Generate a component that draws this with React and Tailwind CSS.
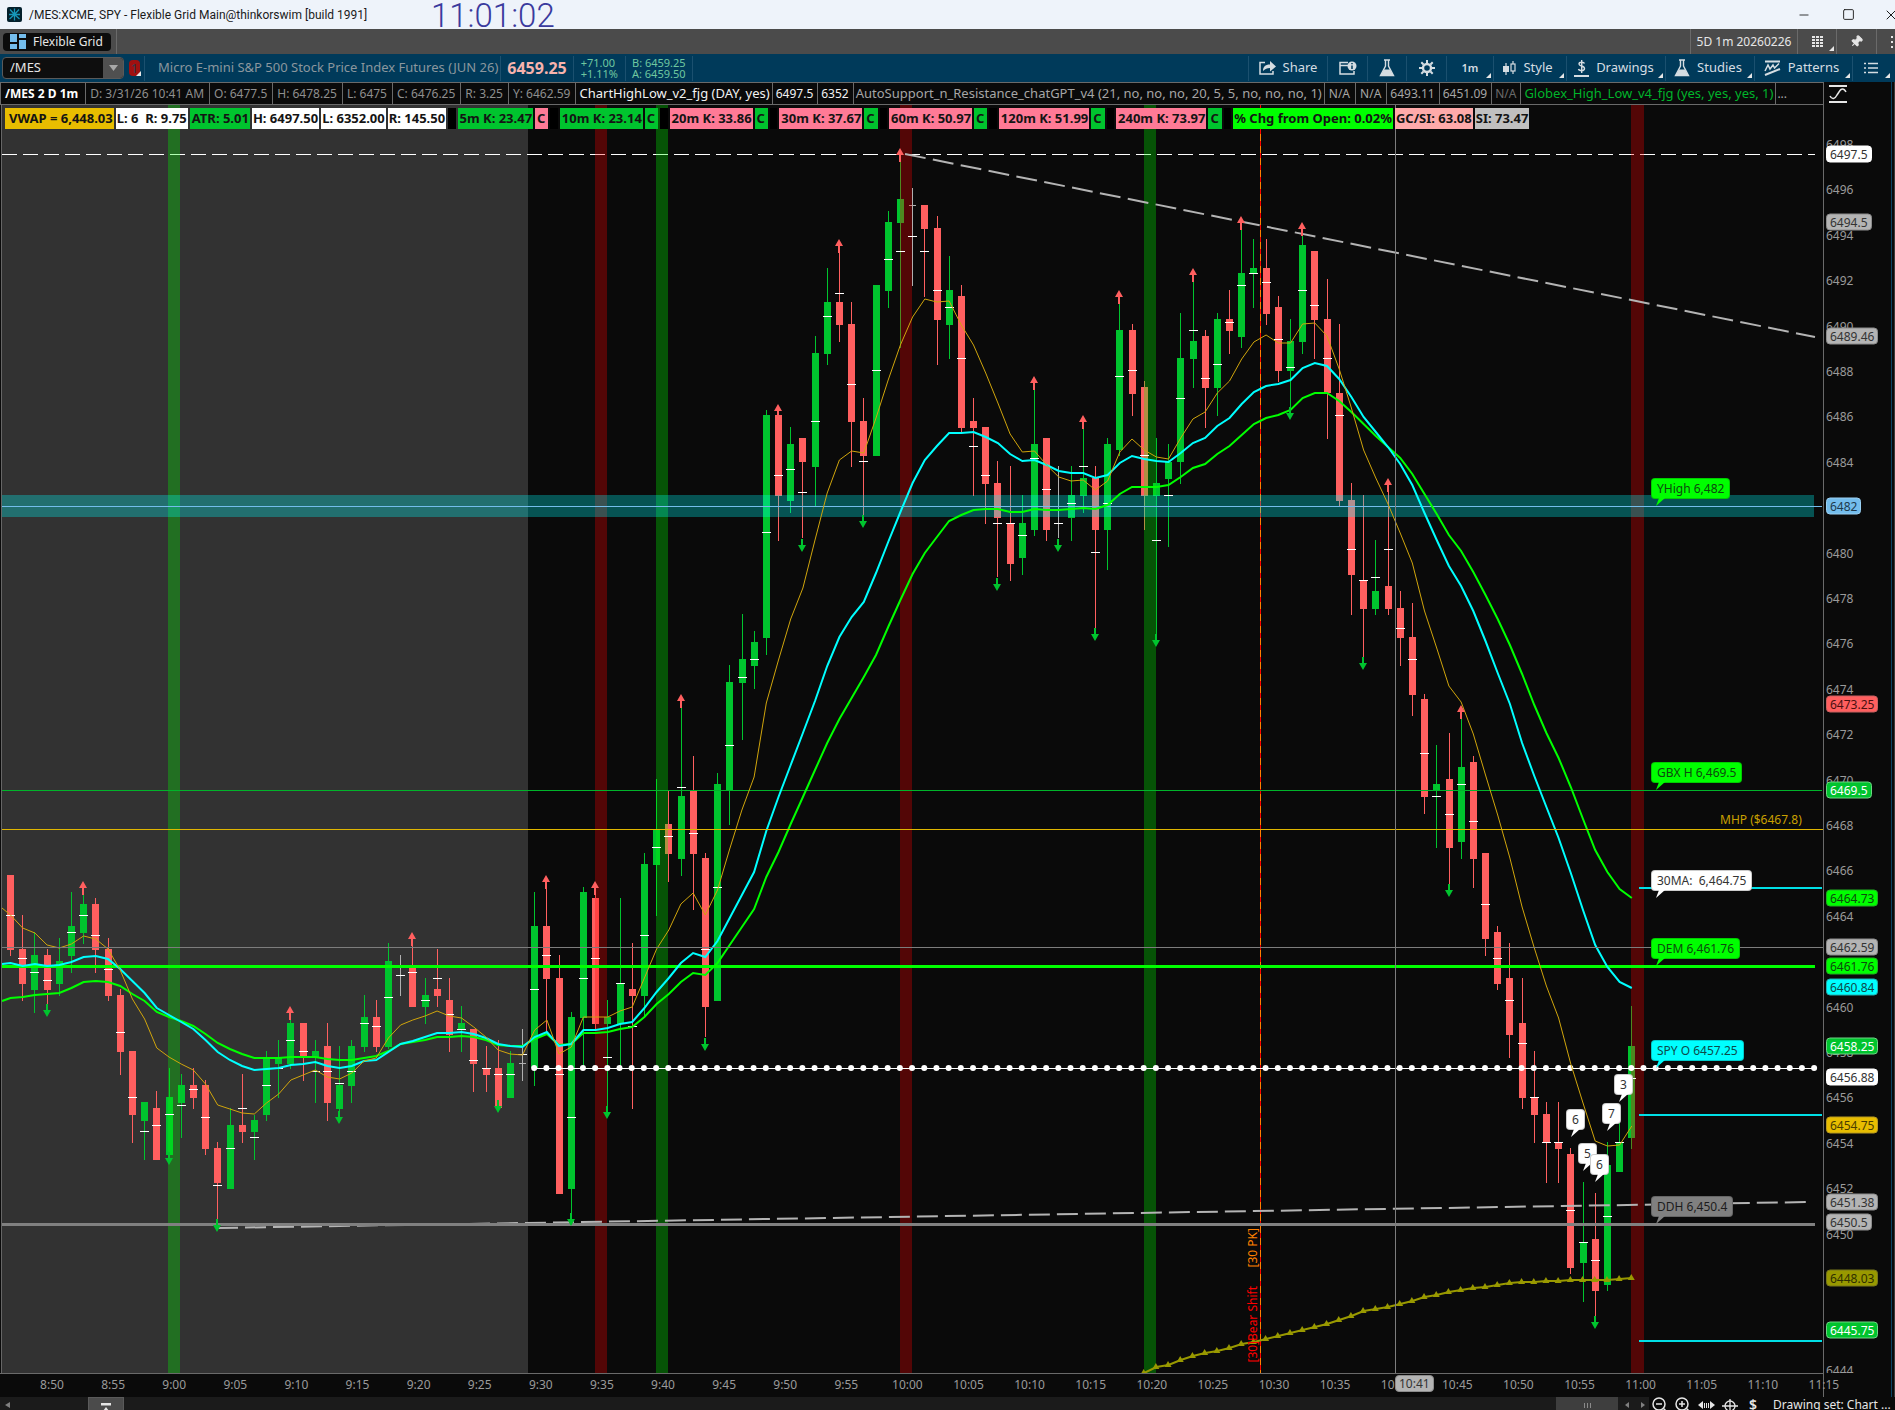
import React from "react";
import { Pin, Minus, Square, X } from "lucide-react";

const UP = "#ff5f5f";
const DOWN = "#00c42e";

// Plot space: x 0..1823, y 105..1373
const PLOT = { w: 1823, top: 105, h: 1268 };
const barX = (i) => 10.5 + 12.19 * i;
const barPx = (i) => Math.floor(barX(i) + 0.1);
const pctX = (x) => `${(x / PLOT.w) * 100}%`;
const pctY = (y) => `${((y - PLOT.top) / PLOT.h) * 100}%`;

// direction, high, body top, body bottom, low, pivot mark
const candles = `r875,875,950,956,915 r915,949,984,1001,958 g932,955,990,1013,972 r949,955,990,1004,980 g938,961,984,996,966
g892,926,956,973,932 g895,904,933,944,915 r898,904,950,973,935 r938,949,996,1001,969 r989,995,1052,1075,1032
r1051,1051,1115,1143,1097 g1102,1102,1121,1160,1131 r1091,1108,1160,1160,1125 g1068,1097,1155,1156,1114 g1074,1085,1103,1138,1105
r1068,1085,1098,1109,1089 r1080,1085,1149,1155,1117 r1142,1148,1183,1219,1185 g1108,1125,1189,1189,1148 r1074,1125,1132,1143,1108
g1115,1120,1132,1160,1137 g1051,1057,1115,1121,1085 g1040,1057,1064,1098,1068 g1020,1023,1064,1069,1040 r1023,1023,1058,1081,1051
g1040,1051,1057,1103,1071 r1023,1046,1103,1121,1071 g1046,1085,1109,1111,1083 g1040,1046,1086,1103,1071 g995,1017,1047,1052,1023
r1000,1017,1047,1052,1026 g943,961,1047,1049,997 w955,975,975,996,975 r946,966,1007,1007,972 g978,995,1007,1024,1000
r949,989,996,1007,978 r978,1000,1035,1052,1014 g1006,1023,1030,1052,1029 r1029,1029,1064,1092,1060 r1046,1068,1075,1092,1068
r1040,1068,1108,1109,1074 g1051,1063,1098,1098,1074 w1029,1063,1063,1081,1054 g892,926,1068,1086,989 r889,926,979,1032,955
r955,978,1194,1194,1074 g1012,1017,1189,1213,1117 g887,892,1018,1068,978 r895,898,1024,1030,958 g1000,1017,1024,1107,1057
g898,983,1024,1068,983 r943,989,996,1109,1026 g853,864,996,1017,935 g779,829,865,916,847 r791,824,854,882,836
g708,796,859,876,787 r756,790,854,910,833 r853,858,1007,1037,949 g773,784,1001,1001,887 g665,682,790,825,745
g614,659,683,740,677 g631,642,666,689,659 g410,415,638,655,532 r415,415,496,541,475 g427,444,501,513,469
r438,438,462,538,492 g336,353,467,506,421 g268,302,354,365,316 r253,302,325,342,293 r302,324,422,467,384
r398,421,456,515,461 g285,285,456,456,370 g211,222,291,308,259 g162,199,223,348,251 w188,205,205,286,236
r205,205,229,297,251 r216,228,320,365,290 g256,290,325,359,307 r285,296,428,433,358 r398,421,428,496,446
r427,427,484,524,475 r461,483,518,577,523 r466,523,564,581,523 g495,523,558,575,535 g390,444,530,536,458
r438,438,530,541,489 w466,523,523,538,523 g466,495,518,541,503 g429,478,496,513,466 r466,478,530,628,552
g438,444,530,570,503 g304,330,450,456,376 r324,330,394,416,370 r381,387,496,530,455 g438,483,496,634,540
g444,462,479,547,495 g313,358,462,484,398 g282,341,359,388,330 r330,336,388,428,378 g313,319,388,416,364
r290,319,331,354,322 g230,273,337,348,285 g239,268,273,308,273 r239,268,314,325,282 r296,307,371,382,339
g319,341,371,407,367 g236,245,342,354,290 r251,251,320,359,305 r279,319,393,439,358 r324,393,501,506,415
r483,500,575,615,549 r495,580,609,657,580 g540,591,609,615,577 r492,586,609,615,549 r591,608,638,666,628
r603,637,695,716,659 r694,699,797,814,753 g745,784,791,848,796 r733,779,848,885,814 g718,767,842,859,784
r756,762,859,888,821 r853,853,939,956,904 r926,932,984,990,958 r943,978,1035,1058,1000 r978,1023,1098,1109,1043
r1051,1097,1115,1143,1097 r1102,1114,1142,1183,1142 r1102,1142,1149,1183,1142 r1148,1154,1268,1274,1210 g1182,1243,1263,1302,1242
r1193,1239,1291,1317,1260 g1142,1165,1285,1291,1216 g1122,1142,1172,1172,1142 g1006,1046,1138,1149,1078`
  .split(/\s+/)
  .map((s) => [s[0], ...s.slice(1).split(",").map(Number)]);

// bar index, tip y
const peaks = [[6, 881], [23, 1006], [33, 932], [44, 875], [48, 881], [55, 694], [63, 404], [68, 239], [73, 148], [84, 376], [88, 415], [91, 290], [97, 268], [101, 216], [106, 222], [113, 478], [119, 705]];
const troughs = [[3, 1017], [13, 1165], [17, 1232], [27, 1124], [40, 1113], [46, 1226], [49, 1119], [57, 1051], [65, 552], [70, 528], [81, 591], [86, 552], [89, 641], [94, 647], [105, 420], [111, 670], [118, 897], [130, 1329]];

const gold = [915, 928, 933, 945, 948, 944, 936, 939, 949, 970, 999, 1019, 1048, 1057, 1064, 1070, 1084, 1105, 1109, 1113, 1114, 1103, 1094, 1080, 1075, 1070, 1077, 1079, 1073, 1061, 1058, 1038, 1025, 1020, 1016, 1011, 1016, 1018, 1027, 1037, 1050, 1054, 1055, 1030, 1020, 1054, 1047, 1017, 1017, 1017, 1011, 1007, 978, 949, 930, 904, 893, 915, 890, 849, 810, 777, 703, 660, 619, 588, 540, 493, 460, 451, 453, 418, 380, 345, 317, 299, 302, 301, 325, 345, 373, 403, 434, 452, 451, 465, 477, 481, 480, 490, 481, 452, 439, 450, 457, 459, 438, 419, 412, 393, 381, 359, 342, 335, 343, 343, 324, 323, 336, 369, 408, 450, 478, 504, 533, 563, 611, 648, 686, 702, 734, 775, 815, 858, 907, 948, 986, 1018, 1064, 1103, 1141, 1146, 1145, 1126];
const cyan = [963, 966, 964, 966, 965, 962, 957, 956, 959, 969, 981, 993, 1008, 1015, 1022, 1029, 1040, 1052, 1060, 1066, 1070, 1069, 1068, 1065, 1064, 1062, 1066, 1068, 1066, 1061, 1060, 1052, 1044, 1041, 1037, 1033, 1033, 1032, 1034, 1038, 1044, 1046, 1047, 1037, 1032, 1046, 1044, 1030, 1030, 1028, 1024, 1022, 1008, 992, 978, 963, 953, 957, 941, 918, 895, 872, 831, 797, 765, 733, 701, 666, 637, 617, 602, 573, 542, 512, 483, 460, 446, 433, 433, 432, 437, 443, 454, 461, 460, 465, 471, 473, 473, 478, 475, 463, 456, 459, 461, 462, 453, 443, 438, 426, 418, 404, 392, 386, 384, 380, 368, 363, 366, 379, 397, 417, 432, 447, 464, 485, 513, 540, 566, 586, 611, 641, 673, 704, 743, 776, 807, 838, 873, 910, 945, 967, 982, 988];
const lime = [998, 997, 995, 994, 993, 988, 982, 981, 982, 986, 994, 1001, 1012, 1017, 1021, 1026, 1034, 1043, 1049, 1054, 1058, 1058, 1058, 1057, 1057, 1057, 1059, 1060, 1060, 1058, 1056, 1051, 1044, 1042, 1040, 1037, 1037, 1036, 1037, 1040, 1045, 1046, 1046, 1039, 1034, 1045, 1044, 1033, 1033, 1032, 1029, 1027, 1017, 1004, 994, 982, 973, 975, 963, 945, 927, 909, 877, 852, 824, 797, 770, 743, 719, 698, 677, 655, 627, 600, 574, 553, 537, 521, 515, 510, 509, 509, 512, 512, 509, 510, 510, 509, 508, 509, 505, 494, 487, 487, 487, 485, 477, 468, 464, 454, 446, 435, 424, 418, 415, 410, 398, 393, 393, 401, 412, 424, 436, 447, 458, 474, 494, 514, 535, 551, 572, 595, 619, 645, 674, 705, 733, 758, 787, 819, 850, 872, 889, 898];
const vwapStart = 93;
const vwap = [1373, 1367, 1365, 1360, 1356, 1353, 1351, 1348, 1344, 1342, 1339, 1336, 1333, 1330, 1327, 1324, 1320, 1316, 1311, 1309, 1307, 1304, 1301, 1297, 1295, 1292, 1290, 1288, 1287, 1285, 1283, 1282, 1282, 1281, 1281, 1280, 1280, 1280, 1280, 1279, 1278];

const path = (ys, y0, start = 0) =>
  (y0 ? `2,${y0} ` : "") + ys.map((y, k) => `${barX(k + start).toFixed(1)},${y}`).join(" ");

function Chart() {
  return (
    <svg
      className="absolute inset-0 h-full w-full"
      viewBox={`0 ${PLOT.top} ${PLOT.w} ${PLOT.h}`}
      preserveAspectRatio="none"
      role="img"
      aria-label="/MES one minute candles"
    >
      <rect x="2" y="105" width="526" height="1268" fill="#323232" />
      <g shapeRendering="crispEdges">
        <rect x="1260" y="105" width="1" height="1268" fill="#ff8000" />
        <line x1="1260.5" x2="1260.5" y1="105" y2="1373" stroke="#ff0000" strokeDasharray="5 7" />
      </g>
      <line x1="2" x2="1815" y1="154.5" y2="154.5" stroke="#fff" strokeDasharray="15 6" shapeRendering="crispEdges" />
      <g shapeRendering="crispEdges">
        {candles.map(([d, hi, a, b, lo], i) => {
          const c = d === "g" ? DOWN : d === "r" ? UP : "#b0b0b0";
          const x = barPx(i);
          return (
            <g key={i} fill={c}>
              <rect x={x} y={hi} width="1" height={lo - hi} />
              <rect x={x - 3} y={a} width="7" height={Math.max(1, b - a)} />
            </g>
          );
        })}
      </g>
      <g shapeRendering="crispEdges">
        <rect x="168" y="105" width="12" height="1268" fill="#00ff00" fillOpacity="0.3" />
        <rect x="595" y="105" width="12" height="1268" fill="#ff0000" fillOpacity="0.3" />
        <rect x="656" y="105" width="12" height="1268" fill="#00ff00" fillOpacity="0.3" />
        <rect x="900" y="105" width="12" height="1268" fill="#ff0000" fillOpacity="0.3" />
        <rect x="1144" y="105" width="12" height="1268" fill="#00ff00" fillOpacity="0.3" />
        <rect x="1631" y="105" width="13" height="1268" fill="#ff0000" fillOpacity="0.3" />
        <rect x="2" y="495" width="1812" height="22" fill="#00ffff" fillOpacity="0.3" />
        <rect x="2" y="506" width="1820" height="1" fill="#74bdec" />
        <rect x="2" y="790" width="1820" height="1" fill="#00b42a" />
      </g>
      <g shapeRendering="crispEdges" fill="#fff">
        {candles.map((c, i) => (
          <rect key={i} x={barPx(i) - 4} y={c[5]} width="9" height="1" />
        ))}
      </g>
      <polyline points="217,1228 1809,1202" fill="none" stroke="#b4b4b4" strokeWidth="2" strokeDasharray="21 7" />
      <polyline points="905,154 1815,337" fill="none" stroke="#b4b4b4" strokeWidth="2" strokeDasharray="21 7.4" />
      <g shapeRendering="crispEdges">
        <rect x="2" y="965" width="1813" height="3" fill="#00ff00" />
        <rect x="534" y="1068" width="1282" height="1" fill="#fff" />
        <rect x="2" y="1223" width="1813" height="3" fill="#808080" />
      </g>
      {Array.from({ length: 106 }, (_, k) => (
        <circle key={k} cx={barX(43 + k) - 0.5} cy="1068" r="3" fill="#fff" />
      ))}
      <polyline points={path(lime, 1001)} fill="none" stroke="#00ff00" strokeWidth="2" />
      <polyline points={path(cyan, 964)} fill="none" stroke="#00ffff" strokeWidth="2" />
      <polyline points={path(gold, 908)} fill="none" stroke="#d0a50c" strokeWidth="1" />
      <polyline points={path(vwap, 0, vwapStart)} fill="none" stroke="#999900" strokeWidth="2" />
      {vwap.map((y, k) => {
        const x = barX(k + vwapStart) - 0.5;
        return <polygon key={k} points={`${x - 3.5},${y + 2} ${x},${y - 4} ${x + 3.5},${y + 2}`} fill="#999900" />;
      })}
      {peaks.map(([i, y]) => (
        <path key={i} d={`M${barPx(i)} ${y}l4 7h-3v7h-2v-7h-3z`} fill={UP} />
      ))}
      {troughs.map(([i, y]) => (
        <path key={i} d={`M${barPx(i)} ${y}l4 -7h-3v-6h-2v6h-3z`} fill={DOWN} />
      ))}
      <g shapeRendering="crispEdges">
        <rect x="1639" y="887" width="183" height="2" fill="#00dfe6" />
        <rect x="1639" y="1114" width="183" height="2" fill="#00dfe6" />
        <rect x="1639" y="1340" width="183" height="2" fill="#00dfe6" />
        <rect x="2" y="829" width="1821" height="1" fill="#e0b600" />
        <rect x="2" y="947" width="1821" height="1" fill="#7d7d7d" />
        <rect x="1395" y="105" width="1" height="1268" fill="#7d7d7d" />
        <rect x="1" y="105" width="1" height="1268" fill="#666" />
      </g>
    </svg>
  );
}

const bubbles = [
  ["YHigh 6,482", 1651, 478, "bg-[#00ff00] text-[#0d4a0d]", "#00ff00"],
  ["GBX H 6,469.5", 1651, 762, "bg-[#00ff00] text-[#0d4a0d]", "#00ff00"],
  ["30MA:  6,464.75", 1651, 870, "bg-white text-[#333]", "#ffffff"],
  ["DEM 6,461.76", 1651, 938, "bg-[#00ff00] text-[#0d4a0d]", "#00ff00"],
  ["SPY O 6457.25", 1651, 1040, "bg-[#00ffff] text-[#0d4a4a]", "#00ffff"],
  ["DDH 6,450.4", 1651, 1196, "bg-[#808080] text-[#1c1c1c]", "#808080"],
  ["6", 1566, 1109, "bg-white text-[#333]", "#ffffff"],
  ["5", 1578, 1143, "bg-white text-[#333]", "#ffffff"],
  ["6", 1590, 1154, "bg-white text-[#333]", "#ffffff"],
  ["7", 1602, 1103, "bg-white text-[#333]", "#ffffff"],
  ["3", 1614, 1074, "bg-white text-[#333]", "#ffffff"],
];

function Bubble({ text, x, y, tone, fill }) {
  return (
    <div className="absolute" style={{ left: pctX(x), top: pctY(y) }}>
      <div className={`h-[21px] rounded border border-black/20 px-[5px] text-xs leading-5 whitespace-pre ${tone}`}>{text}</div>
      <svg className="absolute top-5 left-[5px]" width="9" height="8" viewBox="0 0 9 8" aria-hidden="true">
        <path d="M3 0H9L0 8z" fill={fill} />
      </svg>
    </div>
  );
}

const chips = [
  ["6497.5", 154, "bg-white text-[#333] border-white"],
  ["6494.5", 222, "bg-[#b4b4b4] text-[#333] border-[#8c8c8c]"],
  ["6489.46", 336, "bg-[#b4b4b4] text-[#333] border-[#8c8c8c]"],
  ["6482", 506, "bg-[#74bdec] text-[#1d3a4c] border-[#9ad0f3]"],
  ["6473.25", 704, "bg-[#ff5f5f] text-[#4a1010] border-[#c96060]"],
  ["6469.5", 790, "bg-[#00c42e] text-white border-[#6fd384]"],
  ["6464.73", 898, "bg-[#00ff00] text-[#0d4a0d] border-[#20b020]"],
  ["6462.59", 947, "bg-[#b4b4b4] text-[#333] border-[#8c8c8c]"],
  ["6461.76", 966, "bg-[#00ff00] text-[#0d4a0d] border-[#20b020]"],
  ["6460.84", 987, "bg-[#00ffff] text-[#0d4a4a] border-[#20b0b0]"],
  ["6458.25", 1046, "bg-[#00c42e] text-white border-[#6fd384]"],
  ["6456.88", 1077, "bg-white text-[#333] border-white"],
  ["6454.75", 1125, "bg-[#e8bd00] text-[#4a3d00] border-[#b89a20]"],
  ["6451.38", 1202, "bg-[#b4b4b4] text-[#333] border-[#8c8c8c]"],
  ["6450.5", 1222, "bg-[#b4b4b4] text-[#333] border-[#8c8c8c]"],
  ["6448.03", 1278, "bg-[#999900] text-[#303000] border-[#77771a]"],
  ["6445.75", 1330, "bg-[#00c42e] text-white border-[#6fd384]"],
];

const covered = [6482, 6462, 6448, 6446];
const prices = Array.from({ length: 28 }, (_, k) => 6498 - 2 * k).filter((p) => !covered.includes(p));
const priceY = (p) => 145 + (6498 - p) * 22.7;
const times = ["8:50", "8:55", "9:00", "9:05", "9:10", "9:15", "9:20", "9:25", "9:30", "9:35", "9:40", "9:45", "9:50", "9:55", "10:00", "10:05", "10:10", "10:15", "10:20", "10:25", "10:30", "10:35", "10:40", "10:45", "10:50", "10:55", "11:00", "11:05", "11:10", "11:15"];

const DATA = "pl-1 pr-[5px] text-[#8f8f8f]";
const VALUE = "pl-1 pr-[5px] text-[#a6a6a6]";
const header = [
  ["D: 3/31/26 10:41 AM", DATA],
  ["O: 6477.5", DATA],
  ["H: 6478.25", DATA],
  ["L: 6475", DATA],
  ["C: 6476.25", DATA],
  ["R: 3.25", DATA],
  ["Y: 6462.59", DATA],
  ["ChartHighLow_v2_fjg (DAY, yes)", "pl-[3px] pr-[2px] text-[13px] text-[#f2f2f2]"],
  ["6497.5", "pl-[3px] pr-1 text-[#f2f2f2]"],
  ["6352", "pl-[3px] pr-1 text-[#f2f2f2]"],
  ["AutoSupport_n_Resistance_chatGPT_v4 (21, no, no, no, 20, 5, 5, no, no, no, 1)", "pl-[2px] pr-[2px] text-[13px] text-[#a6a6a6]"],
  ["N/A", VALUE],
  ["N/A", VALUE],
  ["6493.11", "pl-[3px] pr-1 text-[#a6a6a6]"],
  ["6451.09", "pl-[3px] pr-1 text-[#a6a6a6]"],
  ["N/A", "pl-[3px] pr-1 text-[#6a6a6a]"],
  ["Globex_High_Low_v4_fjg (yes, yes, yes, 1)", "pl-[3px] pr-[2px] text-[13px] text-[#00b42a]"],
];

const G = "bg-[#00c42e] pl-[2px] pr-px";
const P = "bg-[#ff7a96] pl-[2px] pr-px";
const CG = "bg-[#00c42e] pl-[2px] pr-[3px]";
const CP = "bg-[#ff7a96] pl-[2px] pr-[3px]";
const W = "bg-white px-px";
const K = "bg-black px-[2px]";
const labels = [
  ["VWAP = 6,448.03", "bg-[#e8bd00] pl-1 pr-px"],
  ["L: 6  R: 9.75", W],
  ["ATR: 5.01", G],
  ["H: 6497.50", W],
  ["L: 6352.00", W],
  ["R: 145.50", W],
  [" ", K],
  ["5m K: 23.47", G],
  ["C", CP],
  [" ", K],
  ["10m K: 23.14", G],
  ["C", CG],
  [" ", K],
  ["20m K: 33.86", P],
  ["C", CG],
  [" ", K],
  ["30m K: 37.67", P],
  ["C", CG],
  [" ", K],
  ["60m K: 50.97", P],
  ["C", CG],
  [" ", K],
  ["120m K: 51.99", P],
  ["C", CG],
  [" ", K],
  ["240m K: 73.97", P],
  ["C", CG],
  [" ", K],
  ["% Chg from Open: 0.02%", "bg-[#00ff00] px-px"],
  ["GC/SI: 63.08", "bg-[#ffaaaa] px-px"],
  ["SI: 73.47", "bg-[#c0c0c0] px-px"],
];

function Corner() {
  return (
    <svg className="absolute right-[2px] bottom-[3px]" width="5" height="5" viewBox="0 0 5 5" aria-hidden="true">
      <path d="M5 0V5H0z" fill="#e6e6e6" />
    </svg>
  );
}

function Flask() {
  return (
    <svg width="16" height="18" viewBox="0 0 16 18" aria-hidden="true">
      <path d="M5 1h6M6.5 1v6L1.5 16.5h13L9.5 7V1" fill="none" stroke="#d5dde2" strokeWidth="1.4" />
      <path d="M5 10.5h6l3.5 6h-13z" fill="#d5dde2" />
    </svg>
  );
}

function Tool({ className, label, children, corner }) {
  return (
    <button
      type="button"
      aria-label={label}
      className={`relative flex h-full items-center justify-center gap-[7px] border-l border-[#1b506f] text-[13px] text-[#d5dde2] ${className}`}
    >
      {children}
      {corner && <Corner />}
    </button>
  );
}

function TitleBar() {
  return (
    <header className="flex h-[29px] shrink-0 items-center bg-[#eef3fa] pl-[7px] text-[#1b1b1b]">
      <svg width="15" height="15" viewBox="0 0 15 15" aria-hidden="true">
        <rect width="15" height="15" rx="2" fill="#04202c" />
        <path d="M7.5 7.5L3 2.5M7.5 7.5L12 2.5M7.5 7.5L2.5 12M7.5 7.5L12.5 12M7.5 7.5V1.5M7.5 7.5V13.5M7.5 7.5H2M7.5 7.5H13" stroke="#1796b8" strokeWidth="1.3" />
      </svg>
      <h1 className="ml-[7px] w-[402px] font-['Roboto'] text-xs whitespace-nowrap">/MES:XCME, SPY - Flexible Grid Main@thinkorswim [build 1991]</h1>
      <time className="pt-[3px] font-['Roboto'] text-[33px] leading-8 font-light text-[#3a3a9e]">11:01:02</time>
      <div className="ml-auto flex items-center overflow-hidden">
        <button type="button" aria-label="Minimize" className="flex w-[45px] justify-center">
          <Minus size={14} strokeWidth={1.5} />
        </button>
        <button type="button" aria-label="Maximize" className="flex w-[45px] justify-center">
          <Square size={13} strokeWidth={1.7} />
        </button>
        <button type="button" aria-label="Close" className="-mr-[5px] ml-[11px] flex w-[18px] justify-center">
          <X size={16} strokeWidth={1.5} />
        </button>
      </div>
    </header>
  );
}

function TabBar() {
  return (
    <nav className="flex h-[25px] shrink-0 items-stretch overflow-hidden bg-[#4b4b4b] text-[#e6e6e6]">
      <div className="flex w-[117px] items-center border-r border-[#6a6a6a] pl-[3px]">
        <button type="button" className="flex h-[18px] w-[108px] items-center gap-[7px] rounded bg-[#0c0c0c] pl-[7px] text-xs whitespace-nowrap">
          <svg width="16" height="15" viewBox="0 0 16 15" fill="#74bdec" aria-hidden="true">
            <path d="M0 0h7v8H0zM9 0h7v4H9zM9 6h7v9H9zM0 10h7v5H0z" />
          </svg>
          Flexible Grid
        </button>
      </div>
      <div className="ml-auto flex items-stretch">
        <button type="button" className="w-[107px] border-l border-[#6a6a6a] text-center text-xs whitespace-nowrap">5D 1m 20260226</button>
        <button type="button" aria-label="Layouts" className="relative flex w-[39px] items-center justify-center border-l border-[#6a6a6a]">
          <svg width="11" height="11" viewBox="0 0 11 11" fill="#e6e6e6" aria-hidden="true">
            {[0, 3, 6, 9].map((y) => [0, 4, 8].map((x) => <rect key={`${x}-${y}`} x={x} y={y} width="3" height="2" />))}
          </svg>
          <Corner />
        </button>
        <button type="button" aria-label="Pin" className="flex w-10 items-center justify-center border-l border-[#6a6a6a]">
          <Pin size={13} fill="#e6e6e6" className="rotate-45" />
        </button>
        <button type="button" aria-label="More" className="flex w-[19px] items-center justify-end border-l border-[#6a6a6a] pr-[2px]">
          <svg width="2" height="12" viewBox="0 0 2 12" fill="#e6e6e6" aria-hidden="true">
            <path d="M0 0h2v2H0zM0 5h2v2H0zM0 10h2v2H0z" />
          </svg>
        </button>
      </div>
    </nav>
  );
}

function Toolbar() {
  return (
    <div className="flex h-[28px] shrink-0 items-center bg-[#003a5a] pr-[3px] pl-[2px]">
      <div className="flex h-[22px] w-[122px] items-stretch overflow-hidden rounded border border-[#5a5a5a] bg-[#0e0e0e]">
        <input aria-label="Symbol" defaultValue="/MES" className="w-[100px] bg-transparent pl-[7px] text-[13px] text-[#e6e6e6]" />
        <button type="button" aria-label="Symbol list" className="flex w-5 items-center justify-center bg-[#505050]">
          <svg width="9" height="6" viewBox="0 0 9 6" aria-hidden="true">
            <path d="M0 0h9L4.500 6z" fill="#a8a8a8" />
          </svg>
        </button>
      </div>
      <button type="button" className="relative ml-[5px] flex h-[22px] w-[14px] items-center">
        <span className="h-4 w-[11px] rounded-sm bg-[#a01010] text-center text-[13px] leading-4 text-[#2a3a4a]">1</span>
        <Corner />
      </button>
      <div className="ml-px flex h-[25px] items-center border-l border-[#1b506f] pr-[2px] pl-[13px] text-[13px] whitespace-nowrap text-[#8b979e]">
        Micro E-mini S&amp;P 500 Stock Price Index Futures (JUN 26)
      </div>
      <div className="flex h-[25px] items-center border-l border-[#1b506f] px-[6px] text-base font-bold text-[#f7b3ad]">6459.25</div>
      <div className="flex h-[25px] flex-col justify-center border-l border-[#1b506f] px-[7px] text-[11px] leading-[11px] text-[#6fc7a0]">
        <span>+71.00</span>
        <span>+1.11%</span>
      </div>
      <div className="flex h-[25px] flex-col justify-center border-x border-[#1b506f] px-[6px] text-[11px] leading-[11px] text-[#6fc7a0]">
        <span>B: 6459.25</span>
        <span>A: 6459.50</span>
      </div>
      <div className="ml-auto flex h-[25px] items-center">
        <Tool className="w-[79px]">
          <svg width="17" height="14" viewBox="0 0 17 14" aria-hidden="true">
            <path d="M6 1.500H1V13H14V10" fill="none" stroke="#d5dde2" strokeWidth="1.500" />
            <path d="M4 10C4 6 6 3.500 11 3.500V0L17 5.500L11 10.500V7C8 7 6 8 4 10z" fill="#d5dde2" />
          </svg>
          Share
        </Tool>
        <Tool className="w-10" label="News">
          <svg width="18" height="14" viewBox="0 0 18 14" aria-hidden="true">
            <path d="M9 1.500H1V13H15V10M1 4.500H9" fill="none" stroke="#d5dde2" strokeWidth="1.500" />
            <circle cx="13" cy="5" r="4.500" fill="#d5dde2" />
            <path d="M13 4.500V8M13 2V3.300" stroke="#003a5a" strokeWidth="1.500" />
          </svg>
        </Tool>
        <Tool className="w-[39px]" label="Edit studies">
          <Flask />
        </Tool>
        <Tool className="w-10" label="Settings">
          <svg width="16" height="16" viewBox="0 0 16 16" aria-hidden="true">
            <circle cx="8" cy="8" r="4" fill="none" stroke="#d5dde2" strokeWidth="2.400" />
            <path d="M8 0V3M8 13V16M0 8H3M13 8H16M2.300 2.300L4.500 4.500M11.500 11.500L13.700 13.700M2.300 13.700L4.500 11.500M11.500 4.500L13.700 2.300" stroke="#d5dde2" strokeWidth="2" />
          </svg>
        </Tool>
        <Tool className="w-[47px] font-semibold" corner>
          <span className="text-[11px]">1m</span>
        </Tool>
        <Tool className="w-[73px] pr-1" corner>
          <svg width="13" height="15" viewBox="0 0 13 15" aria-hidden="true">
            <path d="M3 2V14M10 0V3M10 10V13" stroke="#d5dde2" strokeWidth="1.200" />
            <rect x="0" y="5" width="6" height="6" fill="#d5dde2" />
            <rect x="8" y="3" width="4" height="7" fill="none" stroke="#d5dde2" strokeWidth="1.200" />
          </svg>
          Style
        </Tool>
        <Tool className="w-[99px] pr-1" corner>
          <svg width="15" height="17" viewBox="0 0 15 17" aria-hidden="true">
            <path d="M0 16H15" stroke="#d5dde2" strokeWidth="2" />
            <path d="M10.500 3.500C10 2 5 1.500 5 4C5 6.500 10.500 5.500 10.500 8.500C10.500 11.500 5 11 4.500 9M7.700 0V13" fill="none" stroke="#d5dde2" strokeWidth="1.400" />
          </svg>
          Drawings
        </Tool>
        <Tool className="w-[89px] pr-1" corner>
          <Flask />
          Studies
        </Tool>
        <Tool className="w-[98px] pr-1" corner>
          <svg width="17" height="17" viewBox="0 0 17 17" aria-hidden="true">
            <path d="M1 1.500H16M1 15L16 9" stroke="#d5dde2" strokeWidth="2" />
            <path d="M1 11L4 5L6 9L9 5L10.500 8L15 3.500" fill="none" stroke="#d5dde2" strokeWidth="1.500" />
          </svg>
          Patterns
        </Tool>
        <Tool className="w-10 pr-1" label="Menu" corner>
          <svg width="14" height="12" viewBox="0 0 14 12" aria-hidden="true">
            <path d="M0 1.500H2M4 1.500H14M0 6H2M4 6H14M0 10.500H2M4 10.500H14" stroke="#d5dde2" strokeWidth="1.500" />
          </svg>
        </Tool>
      </div>
    </div>
  );
}

function BottomBar() {
  return (
    <footer className="flex h-[13px] shrink-0 items-start overflow-hidden bg-[#0a0a0a] text-[#e6e6e6]">
      <div className="flex h-4 flex-1 items-center bg-[#1b1b1b]">
        <button type="button" aria-label="Scroll left" className="ml-[5px]">
          <svg width="5" height="6" viewBox="0 0 5 6" aria-hidden="true">
            <path d="M5 0V6L0 3z" fill="#808080" />
          </svg>
        </button>
        <button type="button" aria-label="Expand" className="ml-[78px] flex h-4 w-9 justify-center border border-[#5a5a5a] bg-[#4b4b4b] pt-[5px]">
          <svg width="10" height="8" viewBox="0 0 10 8" aria-hidden="true">
            <path d="M0 0H10V2.500H0zM5 4L8 8H2z" fill="#e6e6e6" />
          </svg>
        </button>
        <div className="ml-auto flex h-4 w-[62px] items-center justify-center gap-[2px] bg-[#3e3e3e]">
          <span className="h-[5px] w-px bg-[#8a8a8a]" />
          <span className="h-[5px] w-px bg-[#8a8a8a]" />
          <span className="h-[5px] w-px bg-[#8a8a8a]" />
        </div>
        <div className="flex w-[31px] items-center justify-end gap-3 pr-1">
          <svg width="4" height="6" viewBox="0 0 4 6" aria-hidden="true">
            <path d="M4 0V6L0 3z" fill="#808080" />
          </svg>
          <svg width="4" height="6" viewBox="0 0 4 6" aria-hidden="true">
            <path d="M0 0V6L4 3z" fill="#808080" />
          </svg>
        </div>
      </div>
      <div className="flex h-4 items-center gap-[7px] pl-[3px]">
        {["M4 7H10", "M4 7H10M7 4V10"].map((d) => (
          <button key={d} type="button" aria-label={d.length > 8 ? "Zoom in" : "Zoom out"}>
            <svg width="16" height="16" viewBox="0 0 16 16" fill="none" stroke="#e6e6e6" strokeWidth="1.500" aria-hidden="true">
              <circle cx="7" cy="7" r="6" />
              <path d={`${d}M11.500 11.500L15.500 15.500`} />
            </svg>
          </button>
        ))}
        <button type="button" aria-label="Fit width">
          <svg width="17" height="8" viewBox="0 0 17 8" fill="#e6e6e6" aria-hidden="true">
            <path d="M5 0V8L0 4zM12 0V8L17 4zM6 2h1v5H6zM8 2h1v5H8zM10 2h1v5h-1z" />
          </svg>
        </button>
        <button type="button" aria-label="Crosshair">
          <svg width="16" height="16" viewBox="0 0 16 16" fill="none" stroke="#e6e6e6" strokeWidth="1.300" aria-hidden="true">
            <circle cx="8" cy="9" r="5" />
            <path d="M8 2V16M0 9H16" />
          </svg>
        </button>
        <button type="button" aria-label="Price" className="w-4 text-sm leading-4 font-semibold">$</button>
        <button type="button" className="w-[127px] pl-[5px] text-left text-xs leading-[18px] whitespace-nowrap">Drawing set: Chart ...</button>
      </div>
    </footer>
  );
}

export default function App() {
  return (
    <div className="flex h-screen flex-col overflow-hidden bg-[#0a0a0a] font-['Noto_Sans',sans-serif]">
      <TitleBar />
      <TabBar />
      <Toolbar />
      <main className="flex min-h-0 flex-1">
        <div className="flex min-w-0 flex-1 flex-col">
          <div className="flex h-[23px] shrink-0 items-stretch overflow-hidden border border-r-0 border-[#6a6a6a] text-xs leading-[21px] whitespace-nowrap">
            <span className="pr-[7px] pl-1 font-bold text-white">/MES 2 D 1m</span>
            {header.map(([t, tone], i) => (
              <span key={i} className={`border-l border-[#6a6a6a] ${tone}`}>{t}</span>
            ))}
            <span className="border-l border-[#6a6a6a] pl-px text-[#a6a6a6]">...</span>
          </div>
          <div className="relative min-h-0 flex-1 overflow-hidden">
            <Chart />
            <div className="absolute top-[3px] left-[5px] flex gap-[2px] text-[13px] leading-[21px] font-bold whitespace-pre text-[#141414]">
              {labels.map(([t, tone], i) => (
                <span key={i} className={tone}>{t}</span>
              ))}
            </div>
            {bubbles.map(([t, x, y, tone, fill]) => (
              <Bubble key={`${t}${x}`} text={t} x={x} y={y} tone={tone} fill={fill} />
            ))}
            <span className="absolute text-xs leading-4 text-[#c9a000]" style={{ left: pctX(1720), top: pctY(812) }}>MHP ($6467.8)</span>
            <span className="absolute rotate-180 text-xs leading-4 whitespace-nowrap text-[#ff8000] [writing-mode:vertical-rl]" style={{ left: pctX(1245), top: pctY(1228) }}>[30 PK]</span>
            <span className="absolute rotate-180 text-xs leading-4 whitespace-nowrap text-[#ff0000] [writing-mode:vertical-rl]" style={{ left: pctX(1245), top: pctY(1286) }}>[30]Bear Shift</span>
          </div>
          <div className="relative h-6 shrink-0 border-t border-[#6a6a6a] text-xs leading-[22px] text-[#9a9a9a]">
            {times.map((t, k) => (
              <span key={t} className="absolute top-0 -translate-x-1/2" style={{ left: pctX(52 + 61.1 * k) }}>{t}</span>
            ))}
            <span className="absolute top-px h-[17px] rounded border border-[#8c8c8c] bg-[#b4b4b4] px-[3px] leading-[15px] text-[#333]" style={{ left: pctX(1395) }}>10:41</span>
          </div>
        </div>
        <aside className="flex w-[68px] shrink-0 flex-col border-l border-[#6a6a6a]">
          <button type="button" aria-label="Curve" className="flex h-[23px] shrink-0 items-center pl-[5px]">
            <svg width="19" height="18" viewBox="0 0 19 18" fill="none" aria-hidden="true">
              <path d="M0 1H18M0 17H18" stroke="#e6e6e6" strokeWidth="2" />
              <path d="M1 11C3 15 6 14 8 10L10 7C12 3 15 3 17 7" stroke="#e6e6e6" strokeWidth="1.500" />
            </svg>
          </button>
          <div className="relative min-h-0 flex-1 overflow-hidden text-xs text-[#9a9a9a]">
            {prices.map((p) => (
              <span key={p} className="absolute left-[2px] -translate-y-1/2 leading-4" style={{ top: pctY(priceY(p)) }}>{p}</span>
            ))}
            {chips.map(([t, y, tone]) => (
              <span key={t} className={`absolute left-[2px] h-[17px] -translate-y-1/2 rounded border px-[3px] leading-[15px] ${tone}`} style={{ top: pctY(y) }}>{t}</span>
            ))}
          </div>
          <div className="h-6 shrink-0" />
        </aside>
        <div className="w-[4px] shrink-0 border-x border-l-[#0b4263] border-r-[#3a3a3a]" />
      </main>
      <BottomBar />
    </div>
  );
}
